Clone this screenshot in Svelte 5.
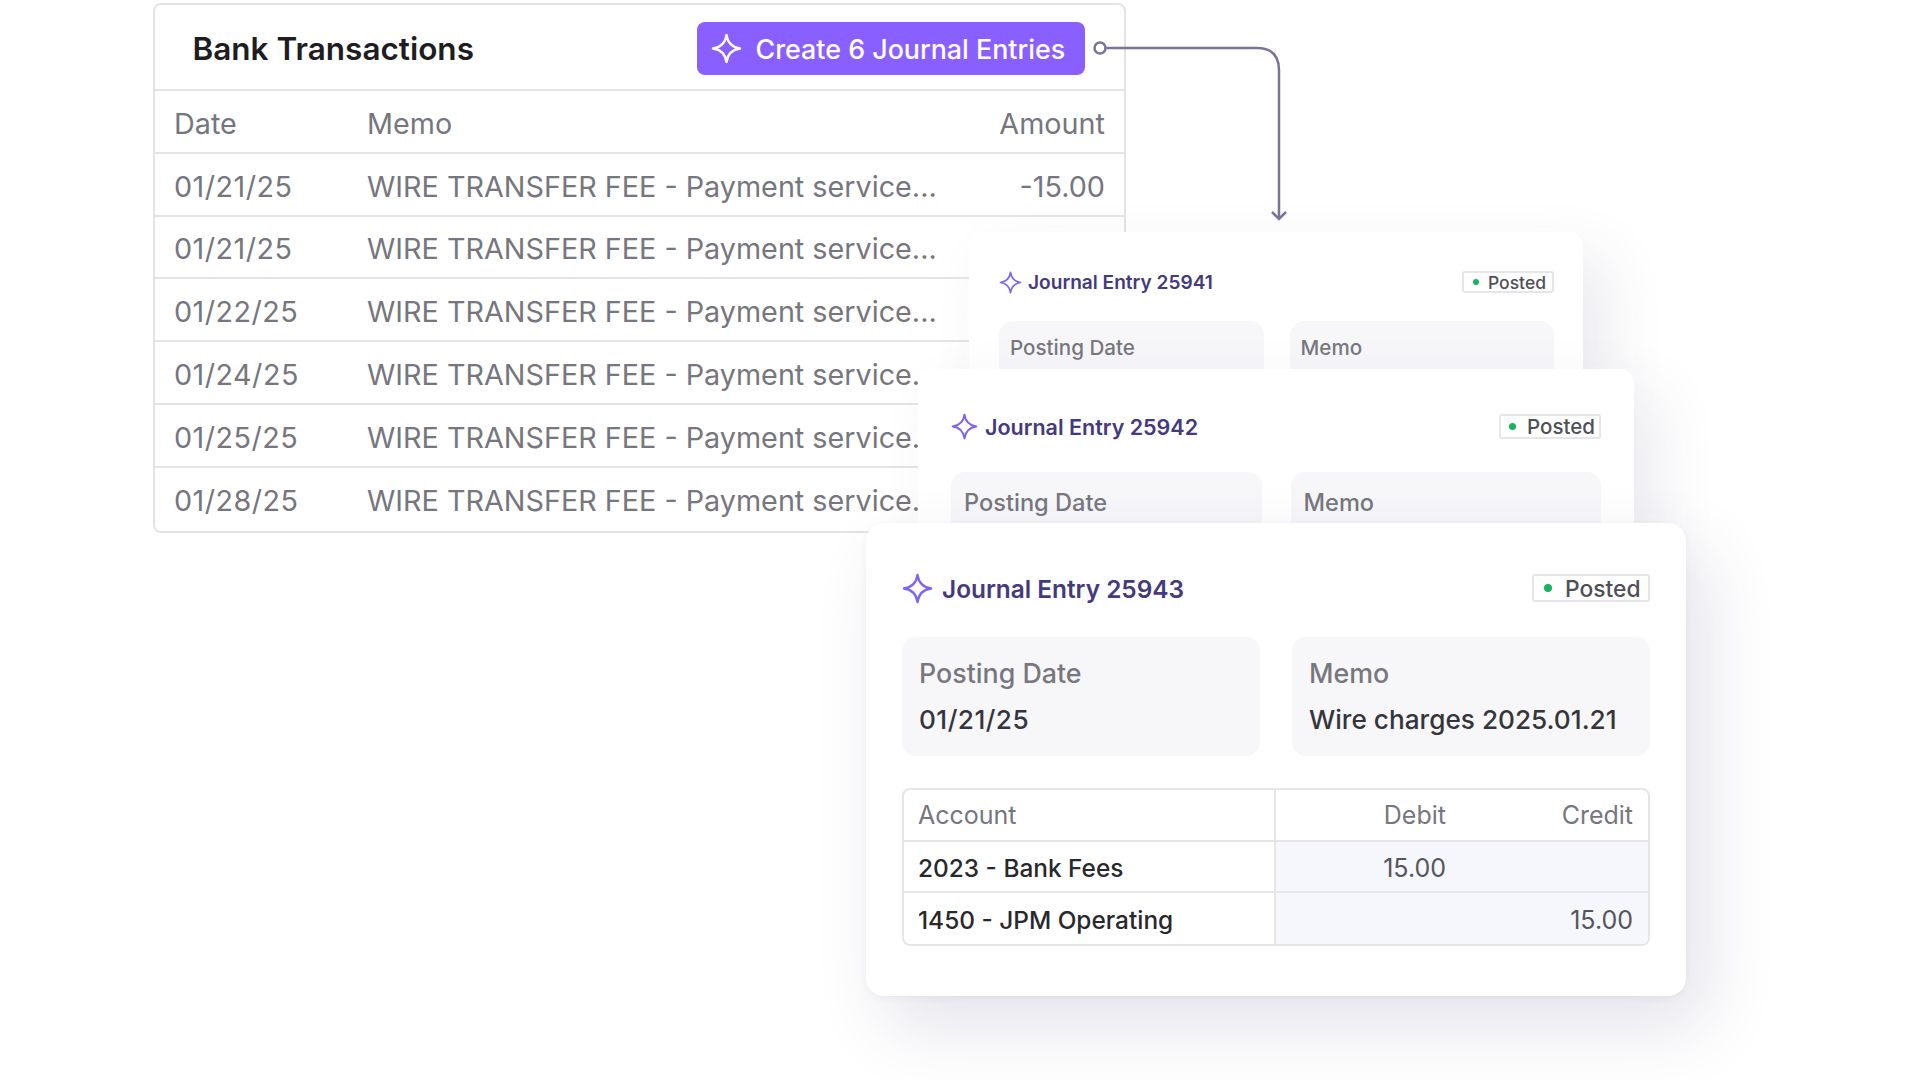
<script>
	const rows = [
		{ date: '01/21/25', memo: 'WIRE TRANSFER FEE - Payment service...', amount: '-15.00' },
		{ date: '01/21/25', memo: 'WIRE TRANSFER FEE - Payment service...', amount: '-15.00' },
		{ date: '01/22/25', memo: 'WIRE TRANSFER FEE - Payment service...', amount: '-15.00' },
		{ date: '01/24/25', memo: 'WIRE TRANSFER FEE - Payment service...', amount: '-15.00' },
		{ date: '01/25/25', memo: 'WIRE TRANSFER FEE - Payment service...', amount: '-15.00' },
		{ date: '01/28/25', memo: 'WIRE TRANSFER FEE - Payment service...', amount: '-15.00' }
	];

	const backCards = [
		{ id: 25941, cls: 'first' },
		{ id: 25942, cls: 'second' }
	];

	const lines = [
		{ account: '2023 - Bank Fees', debit: '15.00', credit: '' },
		{ account: '1450 - JPM Operating', debit: '', credit: '15.00' }
	];

	const star = 'M12 1.5C12.9 8 16 11.1 22.5 12C16 12.9 12.9 16 12 22.5C11.1 16 8 12.9 1.5 12C8 11.1 11.1 8 12 1.5Z';
</script>

<main class="page">
	<section class="bank">
		<header class="bank-head">
			<h2>Bank Transactions</h2>
			<button class="create">
				<svg viewBox="0 0 24 24" class="star"><path d={star} /></svg>
				Create 6 Journal Entries
			</button>
		</header>
		<div class="row head">
			<span class="date">Date</span>
			<span class="memo">Memo</span>
			<span class="amount">Amount</span>
		</div>
		{#each rows as row}
			<div class="row">
				<span class="date spaced">{row.date}</span>
				<span class="memo">{row.memo}</span>
				<span class="amount">{row.amount}</span>
			</div>
		{/each}
	</section>

	<svg class="connector" viewBox="0 0 200 190" width="200" height="190">
		<circle cx="11" cy="10" r="5.5" />
		<path d="M17 10H168Q190 10 190 32V181" />
		<path d="M183 174L190 181L197 174" />
	</svg>

	{#each backCards as card}
		<article class="entry {card.cls}">
			<div class="entry-head">
				<h3>
					<svg viewBox="0 0 24 24" class="star"><path d={star} /></svg>
					Journal Entry {card.id}
				</h3>
				<span class="badge"><i></i>Posted</span>
			</div>
			<div class="fields">
				<div class="field"><span>Posting Date</span></div>
				<div class="field"><span>Memo</span></div>
			</div>
		</article>
	{/each}

	<article class="entry third">
		<div class="entry-head">
			<h3>
				<svg viewBox="0 0 24 24" class="star"><path d={star} /></svg>
				Journal Entry 25943
			</h3>
			<span class="badge"><i></i>Posted</span>
		</div>
		<div class="fields">
			<div class="field">
				<span>Posting Date</span>
				<strong class="spaced">01/21/25</strong>
			</div>
			<div class="field">
				<span>Memo</span>
				<strong>Wire charges 2025.01.21</strong>
			</div>
		</div>
		<div class="ledger">
			<div class="line top">
				<span class="account">Account</span>
				<div class="nums">
					<span class="debit">Debit</span>
					<span class="credit">Credit</span>
				</div>
			</div>
			{#each lines as line}
				<div class="line">
					<span class="account dark">{line.account}</span>
					<div class="nums shaded">
						<span class="debit">{line.debit}</span>
						<span class="credit">{line.credit}</span>
					</div>
				</div>
			{/each}
		</div>
	</article>
</main>

<style>
	:global(body) {
		margin: 0;
		background: #fff;
		font-family: Inter, 'Liberation Sans', sans-serif;
	}
	.page {
		position: relative;
		width: 1920px;
		height: 1080px;
		overflow: hidden;
		padding: 3px 0 0 153px;
		box-sizing: border-box;
	}

	.bank {
		width: 973px;
		height: 530px;
		box-sizing: border-box;
		border: 2px solid #e4e4e8;
		border-radius: 8px;
		overflow: hidden;
		background: #fff;
	}
	.bank-head {
		height: 86px;
		box-sizing: border-box;
		border-bottom: 2px solid #e4e4e8;
		display: flex;
		align-items: center;
		justify-content: space-between;
		padding: 3px 39px 0 37.5px;
	}
	h2 {
		margin: 0;
		font-size: 31.5px;
		font-weight: 600;
		color: #1d1d22;
	}
	.create {
		width: 388px;
		height: 53px;
		padding: 0 0 0 14px;
		border: 0;
		border-radius: 8px;
		background: #8a5fff;
		color: #fff;
		font: 500 26.85px Inter, sans-serif;
		display: flex;
		align-items: center;
		gap: 13.5px;
	}
	.star {
		flex: none;
		width: 31px;
		height: 31px;
		fill: none;
		stroke: #7e63f5;
		stroke-width: 1.8;
		stroke-linejoin: round;
	}
	.create .star {
		stroke: #fff;
	}
	.row {
		height: 62.75px;
		box-sizing: border-box;
		border-bottom: 2px solid #e4e4e8;
		display: flex;
		align-items: center;
		padding: 4px 19px 0;
		font-size: 28.75px;
		color: #76767e;
		white-space: nowrap;
	}
	.row:last-child {
		border-bottom: 0;
	}
	.date {
		width: 193px;
		flex: none;
	}
	.spaced {
		letter-spacing: 0.45px;
	}
	.amount {
		margin-left: auto;
		text-align: right;
	}

	.connector {
		position: absolute;
		left: 1089px;
		top: 38px;
		fill: none;
		stroke: #7d7299;
		stroke-width: 2.5;
	}

	.entry {
		position: absolute;
		box-sizing: border-box;
		background: #fff;
		border-radius: 14px;
		overflow: hidden;
		box-shadow: 24px 24px 60px rgba(60, 60, 110, 0.1);
	}
	.entry-head {
		display: flex;
		align-items: center;
		justify-content: space-between;
	}
	h3 {
		margin: 0;
		display: flex;
		align-items: center;
		font-weight: 600;
		color: #443a7d;
		white-space: nowrap;
	}
	.badge {
		display: flex;
		align-items: center;
		box-sizing: border-box;
		border: 2px solid #e6e6ea;
		border-radius: 3px;
		font-weight: 500;
		color: #4f4f56;
		background: #fff;
	}
	.badge i {
		border-radius: 50%;
		background: #17b55f;
	}
	.fields {
		display: grid;
		grid-template-columns: 1fr 1fr;
	}
	.field {
		background: #f7f7fa;
		border-radius: 14px;
		display: flex;
		flex-direction: column;
		box-sizing: border-box;
	}
	.field span {
		color: #77777f;
		font-weight: 500;
	}
	.field strong {
		font-weight: 500;
		color: #35353b;
	}

	.first {
		left: 969px;
		top: 232px;
		width: 614px;
		height: 160px;
		padding: 39px 29px 0 30px;
	}
	.first .entry-head {
		height: 22px;
	}
	.first h3 {
		font-size: 19.1px;
		gap: 6px;
	}
	.first .star {
		width: 23px;
		height: 23px;
	}
	.first .badge {
		width: 92px;
		height: 22px;
		font-size: 17.5px;
		padding-left: 9px;
		gap: 9px;
	}
	.first .badge i {
		width: 6px;
		height: 6px;
	}
	.first .fields {
		margin-top: 28px;
		gap: 26px;
	}
	.first .field {
		height: 80px;
		padding: 14px 11px;
		font-size: 20.6px;
	}

	.second {
		left: 918px;
		top: 369px;
		width: 716px;
		height: 180px;
		padding: 45px 33px 0 33px;
	}
	.second .entry-head {
		height: 25px;
	}
	.second h3 {
		font-size: 21.5px;
		gap: 7px;
	}
	.second .star {
		width: 27px;
		height: 27px;
	}
	.second .badge {
		width: 102px;
		height: 25px;
		font-size: 20.5px;
		padding-left: 8px;
		gap: 11px;
	}
	.second .badge i {
		width: 7px;
		height: 7px;
	}
	.second .fields {
		margin-top: 33px;
		gap: 29px;
	}
	.second .field {
		height: 90px;
		padding: 16px 13px;
		font-size: 23.6px;
	}

	.third {
		left: 866px;
		top: 523px;
		width: 820px;
		height: 473px;
		padding: 51px 36px 0;
		border-radius: 18px;
		overflow: visible;
		box-shadow: 20px 30px 70px rgba(60, 60, 110, 0.14), 0 2px 6px rgba(60, 60, 110, 0.06);
	}
	.third .entry-head {
		height: 28px;
	}
	.third h3 {
		font-size: 24.4px;
		gap: 9px;
		padding-top: 1px;
	}
	.third .badge {
		width: 118px;
		height: 28px;
		font-size: 22.8px;
		padding-left: 10px;
		gap: 13px;
	}
	.third .badge i {
		width: 8px;
		height: 8px;
	}
	.third .fields {
		margin-top: 35px;
		gap: 32px;
	}
	.third .field {
		height: 119px;
		padding: 20px 17px;
		font-size: 26.8px;
		gap: 15px;
	}
	.third .field strong {
		font-size: 26.2px;
	}

	.ledger {
		margin-top: 32px;
		height: 158px;
		box-sizing: border-box;
		border: 2px solid #e6e6ea;
		border-radius: 8px;
		overflow: hidden;
		font-size: 25px;
		color: #76767e;
	}
	.line {
		display: flex;
		height: 51.5px;
		box-sizing: border-box;
		border-bottom: 2px solid #e6e6ea;
	}
	.line:last-child {
		border-bottom: 0;
		height: 51px;
	}
	.account {
		width: 372px;
		flex: none;
		box-sizing: border-box;
		padding-left: 14px;
		display: flex;
		align-items: center;
		border-right: 2px solid #e6e6ea;
	}
	.account.dark {
		color: #28282d;
		font-weight: 500;
		font-size: 24.4px;
		padding-top: 3px;
	}
	.nums {
		flex: 1;
		display: flex;
		align-items: center;
		padding-right: 15px;
	}
	.nums.shaded {
		background: #f6f6fd;
		color: #55555c;
		padding-top: 3px;
	}
	.debit {
		width: 170px;
		text-align: right;
	}
	.credit {
		flex: 1;
		text-align: right;
	}
</style>
